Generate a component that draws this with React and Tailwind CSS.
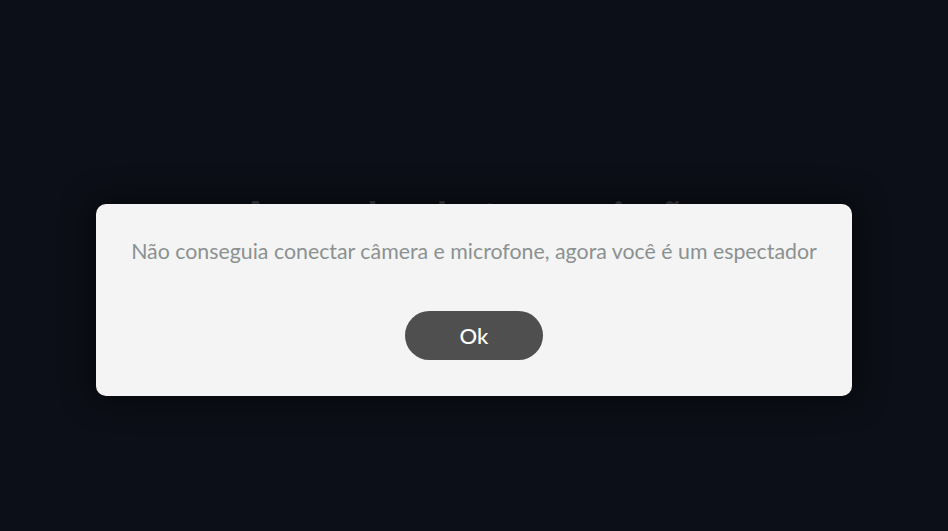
export default function App() {
  return (
    <div
      className="relative w-full h-[531px] bg-[#0c0f17] overflow-hidden"
      style={{ fontFamily: "Lato, 'Noto Sans', sans-serif" }}
    >
      <div className="flex flex-col items-center pt-[192px]">
        <h1 className="text-[42.5px] font-bold text-[#3b3f47] leading-[48px]">
          Aguardando transmissão
        </h1>
      </div>

      <div className="absolute inset-0 flex items-start justify-center pt-[204px]">
        <div className="w-[756px] h-[192px] bg-[#f4f4f4] rounded-[10px] shadow-[0_0_32px_rgba(0,0,0,0.7)] flex flex-col items-center pt-[33px]">
          <p className="text-[21.33px] text-[#8b9191] leading-[28px]">
            Não conseguia conectar câmera e microfone, agora você é um espectador
          </p>
          <button className="mt-[46px] w-[138px] h-[49px] rounded-full bg-[#4f4f4f] text-white text-[22px] font-medium leading-none">
            Ok
          </button>
        </div>
      </div>
    </div>
  );
}
